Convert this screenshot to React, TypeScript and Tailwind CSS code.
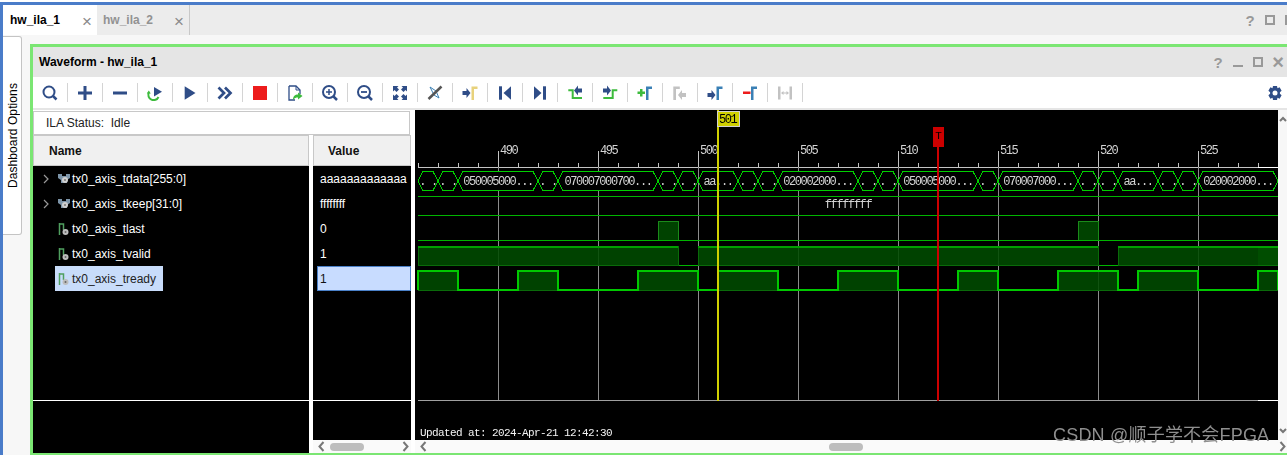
const navy = '#2f4d87';
const green = '#3dbb3d';
const steel = '#3a80b5';
const gray = '#c2c2c2';

const Gamma = ({ x = 11, color = steel }: { x?: number; color?: string }) => (
  <path d={`M${x} 3.5h6v2.5h-3.5v11h-2.500z`} fill={color} />
);
const ArrowR = ({ x, y, color = navy }: { x: number; y: number; color?: string }) => (
  <path d={`M${x} ${y - 2}h4v-3l4 5-4 5v-3h-4z`} fill={color} />
);
const ArrowL = ({ x, y, color = navy }: { x: number; y: number; color?: string }) => (
  <path d={`M${x} ${y}l4-5v3h4v4h-4v3z`} fill={color} />
);

const tools = [
  <g key="search" fill="none" stroke={navy}>
    <circle cx="9" cy="9" r="5.5" strokeWidth="2" />
    <path d="M13 13l3.5 3.5" strokeWidth="2.5" />
  </g>,
  <path key="plus" d="M8.5 3h3v5.5H17v3h-5.5V17h-3v-5.5H3v-3h5.5z" fill={navy} />,
  <rect key="minus" x="3" y="8.5" width="14" height="3" fill={navy} />,
  <g key="refresh">
    <path d="M9 4l8 4.800-8 4.700z" fill={navy} />
    <path d="M3.800 9.500A5.300 5.300 0 1 0 13.500 14" fill="none" stroke={green} strokeWidth="2" />
    <path d="M1.800 10.500h4l-2-3z" fill={green} />
  </g>,
  <path key="play" d="M4.700 3.300L15.500 10 4.700 16.700z" fill={navy} />,
  <path key="run-all" d="M3.500 4.500L9 10l-5.500 5.500M10 4.500L15.500 10 10 15.500" fill="none" stroke={navy} strokeWidth="2.700" />,
  <rect key="stop" x="3" y="3" width="14" height="14" fill="#ed1c1c" />,
  <g key="export">
    <path d="M4 3h7l4 4v4M4 3v14h6" fill="none" stroke={navy} strokeWidth="1.300" />
    <path d="M11 3v4h4" fill="none" stroke={navy} />
    <path d="M8 17c0-4 2-5.500 5-5.500V9.500l4.500 3.500-4.500 3.500v-2c-2 0-3.500.500-5 2.500z" fill={green} />
  </g>,
  <g key="zoom-in" fill="none" stroke={navy}>
    <circle cx="9" cy="9" r="6" strokeWidth="2" />
    <path d="M13.500 13.500l3.500 3.500" strokeWidth="2.500" />
    <path d="M9 6v6M6 9h6" strokeWidth="1.500" />
  </g>,
  <g key="zoom-out" fill="none" stroke={navy}>
    <circle cx="9" cy="9" r="6" strokeWidth="2" />
    <path d="M13.500 13.500l3.500 3.500" strokeWidth="2.500" />
    <path d="M6 9h6" strokeWidth="1.800" />
  </g>,
  <g key="fit" fill={navy}>
    <path d="M3 3h5.500L7 4.500 9 6.500 6.500 9 4.500 7 3 8.500z" />
    <path d="M17 3v5.500L15.500 7l-2 2L11 6.500l2-2L11.500 3z" />
    <path d="M3 17v-5.500L4.500 13l2-2L9 13.500l-2 2L8.500 17z" />
    <path d="M17 17h-5.500l1.500-1.500-2-2 2.500-2.500 2 2 1.500-1.500z" />
  </g>,
  <g key="no-marker">
    <path d="M5 4l6 4 3 7-5-3z" fill="none" stroke={steel} strokeWidth="1" />
    <path d="M3.500 16L16.500 3.500" stroke="#555" strokeWidth="2.500" />
  </g>,
  <g key="cursor">
    <ArrowR x={2.500} y={10} />
    <Gamma x={11.500} color="#e8d27c" />
  </g>,
  <g key="first" fill={navy}>
    <rect x="4" y="3.300" width="3" height="13.400" />
    <path d="M8.500 10L16 3.300v13.400z" />
  </g>,
  <g key="last" fill={navy}>
    <rect x="13" y="3.300" width="3" height="13.400" />
    <path d="M11.500 10L4 3.300v13.400z" />
  </g>,
  <g key="prev-edge">
    <path d="M3.300 7.300h4.400V15H17" fill="none" stroke={green} strokeWidth="2" />
    <ArrowL x={9} y={7.500} />
  </g>,
  <g key="next-edge">
    <path d="M3.300 15h9.400V7.300H17.300" fill="none" stroke={green} strokeWidth="2" />
    <ArrowR x={3} y={7.500} />
  </g>,
  <g key="add-marker">
    <path d="M5 6h2.500v2.500H10V11H7.500v2.500H5V11H2.500V8.500H5z" fill={green} />
    <Gamma />
  </g>,
  <g key="prev-marker">
    <path d="M3.300 3.500h6.500V6H6v11H3.300z" fill={gray} />
    <ArrowL x={8} y={12} color={gray} />
  </g>,
  <g key="next-marker">
    <ArrowR x={2.500} y={12} />
    <Gamma x={11.500} />
  </g>,
  <g key="del-marker">
    <rect x="3" y="8.500" width="7.500" height="2.500" fill="#ed1c1c" />
    <Gamma />
  </g>,
  <g key="delta" fill={gray}>
    <path d="M3 3.500h2.500v13H3zM14.500 3.500H17v13h-2.500z" />
    <path d="M6 10l2.500-2v1.500h3V8l2.500 2-2.500 2v-1.500h-3V12z" />
  </g>,
];

const Tool = ({ children }: { children: React.ReactNode }) => (
  <div className="flex h-[19px] w-[35px] shrink-0 items-center justify-center border-r border-[#d4d4d4]">
    <svg width="20" height="20" viewBox="0 0 20 20" className="shrink-0">
      {children}
    </svg>
  </div>
);

const Gear = () => (
  <svg width="20" height="20" viewBox="0 0 20 20">
    <path
      d="M8 3h4l.500 2.200 2.100-.900 2 3.400-1.700 1.500v1.600l1.700 1.500-2 3.400-2.100-.900L12 17H8l-.500-2.200-2.100.900-2-3.400 1.700-1.500V9.200L3.400 7.700l2-3.400 2.100.900z"
      fill={navy}
    />
    <circle cx="10" cy="10" r="2.500" fill="#fff" />
  </svg>
);

const WinBox = () => <div className="h-[10px] w-[10px] border-2 border-[#999]" />;

const Help = () => <span className="text-[15px] font-bold leading-none text-[#999]">?</span>;

const Slot = ({ children }: { children: React.ReactNode }) => (
  <div className="flex h-[20px] w-[20px] items-center justify-center">{children}</div>
);

const Chevron = ({ dir }: { dir: 'l' | 'r' }) => (
  <svg width="7" height="11" viewBox="0 0 7 11" className="shrink-0">
    <path d={dir === 'l' ? 'M5.500 1L1.500 5.500l4 4.500' : 'M1.500 1l4 4.500-4 4.500'} fill="none" stroke="#777" strokeWidth="2" />
  </svg>
);

const BusIcon = () => (
  <svg width="14" height="12" viewBox="0 0 14 12">
    <path d="M1 1h4v2h4V1h4v4l-3 2v3H4V7L1 5z" fill="#7c94a8" />
    <circle cx="8" cy="7" r="3" fill="#cfcfcf" />
    <circle cx="8" cy="7" r="1" fill="#777" />
  </svg>
);

const BitIcon = () => (
  <svg width="12" height="14" viewBox="0 0 12 14">
    <path d="M1.500 1v12M1.500 2h4v6" fill="none" stroke="#4f9f5f" strokeWidth="1.500" />
    <circle cx="7.500" cy="10" r="3" fill="#bdbdbd" />
    <circle cx="7.500" cy="10" r="1" fill="#666" />
  </svg>
);

const rows = [
  { name: 'tx0_axis_tdata[255:0]', value: 'aaaaaaaaaaaaa', bus: true },
  { name: 'tx0_axis_tkeep[31:0]', value: 'ffffffff', bus: true },
  { name: 'tx0_axis_tlast', value: '0', bus: false },
  { name: 'tx0_axis_tvalid', value: '1', bus: false },
  { name: 'tx0_axis_tready', value: '1', bus: false, selected: true },
];

const busEdges = [418, 438, 458, 538, 558, 658, 678, 698, 738, 758, 778, 858, 878, 898, 978, 998, 1078, 1098, 1118, 1158, 1178, 1198, 1278];
const busLabels = ['. .', '. .', '050005000...', '. .', '070007000700...', '. .', '. .', 'aa...', '. .', '. .', '020002000...', '. .', '. .', '050005000...', '. .', '070007000...', '. .', '. .', 'aa...', '. .', '. .', '020002000...'];

const tlast = [[658, 678], [1078, 1098]];
const tvalid = [[418, 678], [698, 1098], [1118, 1278]];
const tready = [[418, 458], [518, 558], [638, 698], [718, 778], [838, 898], [958, 998], [1058, 1118], [1138, 1198], [1258, 1278]];

const stepPath = (highs: number[][], hi: number, lo: number) => {
  let d = `M418 ${lo}`;
  highs.forEach(([a, b]) => {
    d += ` L${a} ${lo} L${a} ${hi} L${b} ${hi} L${b} ${lo}`;
  });
  return d + ` L1278 ${lo}`;
};

const minorTicks = Array.from({ length: 44 }, (_, i) => 418 + i * 20);
const majors = [490, 495, 500, 505, 510, 515, 520, 525];
const xOf = (n: number) => 498 + (n - 490) * 20;

const monoClass = "[font-family:'Liberation_Mono',monospace]";

const Waves = () => (
  <div className="shrink-0 bg-black">
    <svg width="863" height="330" viewBox="415 110 863 330" className="block [will-change:transform]" shapeRendering="crispEdges">
      {/* ruler */}
      <path d="M418 167.500H1278" stroke="#c4c4c4" />
      {minorTicks.map((x) => (
        <path key={x} d={`M${x + 0.5} 163V167`} stroke="#c4c4c4" />
      ))}
      {majors.map((n) => (
        <g key={n}>
          <path d={`M${xOf(n) + 0.5} 151V400`} stroke="#8c8c8c" />
          <path d={`M${xOf(n) + 0.5} 151V167`} stroke="#c4c4c4" />
        </g>
      ))}
      {/* tdata */}
      {busLabels.map((label, i) => {
        const a = busEdges[i];
        const b = busEdges[i + 1];
        return (
          <path
            key={i}
            d={`M${a} 181L${a + 5} 171.500L${b - 5} 171.500L${b} 181L${b - 5} 190.500L${a + 5} 190.500Z`}
            fill="#000"
            stroke="#00d000"
          />
        );
      })}
      {/* tkeep */}
      <path d="M418 196.500H1278M418 215.500H1278" stroke="#00b400" />
      {/* tlast */}
      {tlast.map(([a, b]) => (
        <rect key={a} x={a + 0.5} y="221.500" width={b - a} height="19" fill="#004b00" fillOpacity="0.880" stroke="#1a8a1a" />
      ))}
      <path d="M418 240.500H1278" stroke="#00b400" />
      {/* tvalid */}
      <path d="M678 265.500H698M1098 265.500H1118" stroke="#00b400" />
      {tvalid.map(([a, b]) => (
        <g key={a}>
          <rect x={a + 0.5} y="246.500" width={b - a} height="19" fill="#004b00" fillOpacity="0.880" stroke="#0a6a0a" />
          <path d={`M${a} 247H${b}`} stroke="#00a000" strokeWidth="2" />
        </g>
      ))}
      {/* tready */}
      {tready.map(([a, b]) => (
        <rect key={a} x={a + 0.5} y="271.500" width={b - a} height="19" fill="#004b00" fillOpacity="0.880" stroke="#0a6a0a" />
      ))}
      <path d={stepPath(tready, 271, 290)} fill="none" stroke="#00c800" strokeWidth="2" />
      {/* end of capture is a shade brighter */}
      <rect x="1258" y="247" width="20" height="19" fill="#00ff00" fillOpacity="0.060" />
      <path d="M1258 167.500H1278M1258 400.500H1278" stroke="#fff" />
      <path d="M418 400.500H1258" stroke="#a0a0a0" />
      <g fontSize="12" letterSpacing="-1.400" fill="#d4d4d4" className={monoClass}>
        {majors.map((n) => (
          <text key={n} x={xOf(n) + 2} y="154">
            {n}
          </text>
        ))}
        {busLabels.map((label, i) => (
          <text key={i} x={(busEdges[i] + busEdges[i + 1]) / 2} y="185" textAnchor="middle">
            {label}
          </text>
        ))}
        <text x="848" y="208" textAnchor="middle">
          ffffffff
        </text>
      </g>
      {/* cursors */}
      <rect x="717" y="110" width="2" height="291" fill="#d0d000" />
      <rect x="717.500" y="111.500" width="22" height="15" fill="#cfcf00" stroke="#d0d0d0" />
      <rect x="937" y="147" width="2" height="254" fill="#cc0000" />
      <rect x="933" y="127" width="11" height="20" fill="#cc0000" />
      <g className={monoClass}>
        <text x="719" y="123" fontSize="12" letterSpacing="-1.400" fill="#000">
          501
        </text>
        <text x="938.500" y="139" textAnchor="middle" fontSize="11" fill="#000">
          T
        </text>
        <text x="420" y="436" fontSize="11" letterSpacing="-0.600" fill="#f4f4f4">
          Updated at: 2024-Apr-21 12:42:30
        </text>
      </g>
    </svg>
  </div>
);

export default function App() {
  return (
    <div className="relative h-[455px] w-[1287px] overflow-hidden bg-white pt-[2px] text-[12px] text-black [font-family:'Liberation_Sans',sans-serif]">
      <div className="flex h-[453px] flex-col border-l-[3px] border-t-[3px] border-[#4a7cc9] bg-[#f7f7f7]">
        {/* editor tabs */}
        <div className="flex h-[30px] shrink-0 items-center bg-[#ececec]">
          <div className="flex h-full w-[94px] items-center bg-white pl-[7px] font-bold">
            hw_ila_1
            <span className="ml-[22px] mt-[3px] text-[17px] font-normal leading-none text-[#8a8a8a]">×</span>
          </div>
          <div className="flex h-full w-[93px] items-center border-r border-[#c8c8c8] pl-[6px] font-bold text-[#929292]">
            hw_ila_2
            <span className="ml-[21px] mt-[3px] text-[17px] font-normal leading-none text-[#8a8a8a]">×</span>
          </div>
          <div className="ml-auto mr-[-13px] flex items-center">
            <Slot><Help /></Slot>
            <Slot><WinBox /></Slot>
            <Slot><WinBox /></Slot>
          </div>
        </div>

        <div className="flex min-h-0 flex-1">
          {/* side tab */}
          <div className="w-[27px] shrink-0 pt-[1px]">
            <div className="flex h-[199px] w-[19px] items-center justify-center rounded-r-[3px] border border-l-0 border-[#c4c4c4] bg-white pl-[2px]">
              <span className="rotate-180 whitespace-nowrap tracking-[0.1px] [writing-mode:vertical-rl]">Dashboard Options</span>
            </div>
          </div>

          {/* waveform window */}
          <div className="mt-[9px] flex min-w-0 flex-1 flex-col border-b-2 border-l-[3px] border-t-[3px] border-[#7be673] bg-white">
            <div className="flex h-[30px] shrink-0 items-center bg-[#e5e5e5] pl-[6px] font-bold">
              Waveform - hw_ila_1
              <div className="ml-auto mr-[-1px] flex items-center">
                <Slot><Help /></Slot>
                <Slot><div className="mt-[8px] h-[2px] w-[10px] bg-[#999]" /></Slot>
                <Slot><WinBox /></Slot>
                <Slot><span className="text-[20px] leading-none text-[#999]">×</span></Slot>
              </div>
            </div>

            <div className="flex h-[33px] shrink-0 items-center border-b-2 border-[#e5e5e5] bg-white">
              {tools.map((tool, i) => (
                <Tool key={i}>{tool}</Tool>
              ))}
              <div className="ml-auto mr-[2px]">
                <Gear />
              </div>
            </div>

            <div className="flex min-h-0 flex-1">
              {/* names and values */}
              <div className="flex w-[382px] shrink-0 flex-col bg-white">
                <div className="mt-[1px] flex h-[24px] w-[377px] shrink-0 items-center border border-[#c8c8c8] pl-[12px] text-[#222]">
                  ILA Status:&nbsp; Idle
                </div>
                <div className="flex min-h-0 flex-1 gap-[4px]">
                  <div className="flex w-[276px] flex-col bg-black">
                    <div className="flex h-[31px] items-center border border-[#c8c8c8] bg-[#f0f0f0] pl-[15px] font-bold text-[#111]">
                      Name
                    </div>
                    <div className="h-[235px] border-b border-white">
                      {rows.map((r) => (
                        <div key={r.name} className="relative flex h-[25px] pl-[22px]">
                          {r.bus && (
                            <svg width="8" height="10" viewBox="0 0 8 10" className="absolute left-[9px] top-[8px]">
                              <path d="M2 1l4 4-4 4" fill="none" stroke="#999" strokeWidth="1.200" />
                            </svg>
                          )}
                          <div className={`flex items-center pr-[7px] ${r.selected ? 'bg-[#c8dcfa] text-[#222]' : 'text-white'}`}>
                            <div className="flex w-[17px] justify-center">{r.bus ? <BusIcon /> : <BitIcon />}</div>
                            {r.name}
                          </div>
                        </div>
                      ))}
                    </div>
                  </div>

                  <div className="flex w-[98px] flex-col">
                    <div className="flex h-[31px] items-center border border-[#c8c8c8] bg-[#f0f0f0] pl-[14px] font-bold text-[#111]">
                      Value
                    </div>
                    <div className="flex-1 bg-black">
                      <div className="h-[235px] border-b border-white">
                        {rows.map((r) => (
                          <div key={r.name} className="flex h-[25px] overflow-hidden pl-[4px]">
                            <div className={`flex flex-1 items-center overflow-hidden whitespace-nowrap ${r.selected ? 'border border-[#4a80c8] bg-[#c8dcff] pl-[2px] text-[#111]' : 'pl-[3px] text-white'}`}>
                              {r.value}
                            </div>
                          </div>
                        ))}
                      </div>
                    </div>
                    <div className="flex h-[13px] shrink-0 items-center bg-[#fafafa] pl-[5px]">
                      <Chevron dir="l" />
                      <div className="ml-[5px] h-[8px] w-[34px] rounded-full bg-[#bdbdbd]" />
                      <div className="ml-[38px]">
                        <Chevron dir="r" />
                      </div>
                    </div>
                  </div>
                </div>
              </div>

              {/* wave area */}
              <div className="flex min-w-0 flex-1 flex-col">
                <div className="flex h-[330px] shrink-0">
                  <Waves />
                  <div className="flex flex-1 flex-col items-center justify-between bg-[#f7f7f7] py-[6px]">
                    <svg width="8" height="6" viewBox="0 0 8 6"><path d="M1 5l3-3 3 3" fill="none" stroke="#777" strokeWidth="2" /></svg>
                    <svg width="8" height="6" viewBox="0 0 8 6"><path d="M1 1l3 3 3-3" fill="none" stroke="#777" strokeWidth="2" /></svg>
                  </div>
                </div>
                <div className="flex h-[13px] shrink-0 items-center bg-[#fafafa] pl-[5px] pr-[1px]">
                  <Chevron dir="l" />
                  <div className="ml-[402px] h-[8px] w-[34px] rounded-full bg-[#bdbdbd]" />
                  <div className="ml-auto">
                    <Chevron dir="r" />
                  </div>
                </div>
              </div>
            </div>
          </div>
        </div>
      </div>
      <span className="absolute left-[1053px] top-[424px] whitespace-nowrap text-[18px] leading-[22px] tracking-[0.2px] text-[#8f8f8f] [font-family:'Liberation_Sans','Noto_Sans_CJK_SC',sans-serif]">
        CSDN @顺子学不会FPGA
      </span>
    </div>
  );
}
